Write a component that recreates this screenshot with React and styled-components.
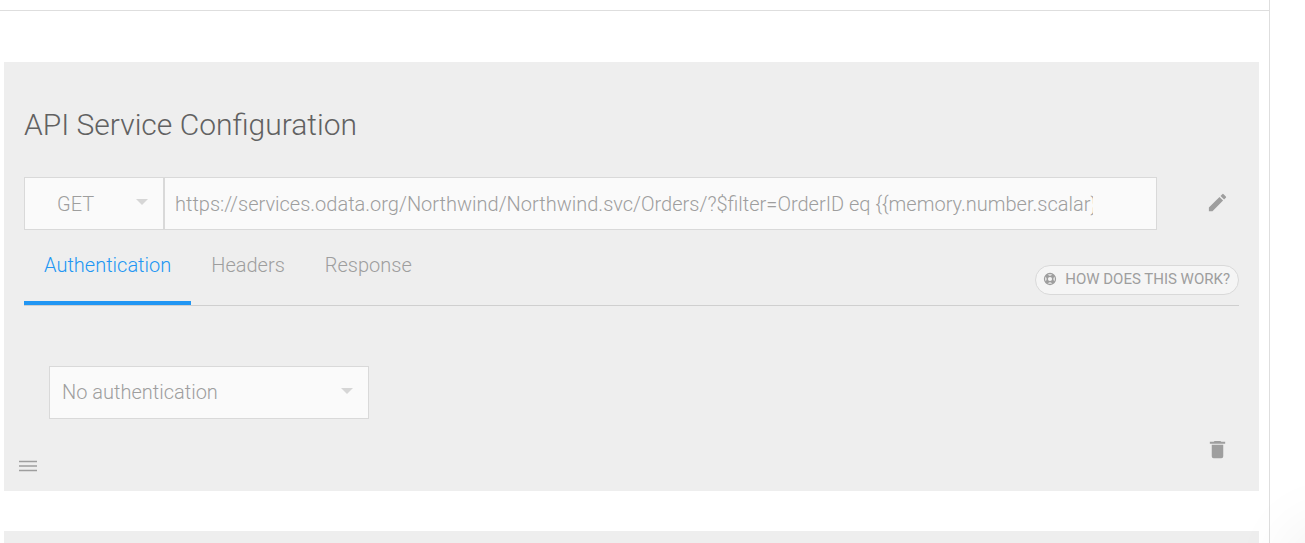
import { useState } from "react";
import styled, { createGlobalStyle } from "styled-components";

const tabs = ["Authentication", "Headers", "Response"];

function App() {
  const [method, setMethod] = useState("GET");
  const [url, setUrl] = useState(
    "https://services.odata.org/Northwind/Northwind.svc/Orders/?$filter=OrderID eq {{memory.number.scalar}}"
  );
  const [activeTab, setActiveTab] = useState("Authentication");
  const [auth, setAuth] = useState("none");

  return (
    <>
      <GlobalStyle />
      <Page>
        <Main>
          <TopBar />
          <CardList>
            <Card>
              <Title>API Service Configuration</Title>
              <RequestRow>
                <MethodBox>
                  <MethodSelect
                    aria-label="Method"
                    value={method}
                    onChange={(e) => setMethod(e.target.value)}
                  >
                    <option>GET</option>
                    <option>POST</option>
                    <option>PUT</option>
                    <option>DELETE</option>
                  </MethodSelect>
                  <Arrow viewBox="0 0 12 6">
                    <path d="M0 0h12L6 6z" />
                  </Arrow>
                </MethodBox>
                <UrlInput
                  aria-label="URL"
                  type="text"
                  value={url}
                  onChange={(e) => setUrl(e.target.value)}
                />
                <IconButton aria-label="Edit">
                  <Icon viewBox="0 0 24 24">
                    <path d="M3 17.25V21h3.75L17.81 9.94l-3.75-3.75L3 17.25zM20.71 7.04a1 1 0 0 0 0-1.41l-2.34-2.34a1 1 0 0 0-1.41 0l-1.83 1.83 3.75 3.75 1.83-1.83z" />
                  </Icon>
                </IconButton>
              </RequestRow>
              <TabBar>
                <TabList role="tablist">
                  {tabs.map((tab) => (
                    <Tab
                      key={tab}
                      role="tab"
                      aria-selected={tab === activeTab}
                      $active={tab === activeTab}
                      onClick={() => setActiveTab(tab)}
                    >
                      {tab}
                    </Tab>
                  ))}
                </TabList>
                <HelpButton>
                  <HelpIcon viewBox="0 0 14 14">
                    <circle cx="7" cy="7" r="5.5" strokeWidth="1.3" />
                    <circle cx="7" cy="7" r="2.8" strokeWidth="1.5" />
                    <path
                      d="M3.2 3.2l1.8 1.8M10.8 3.2L9 5M3.2 10.8L5 9M10.8 10.8L9 9"
                      strokeWidth="3.2"
                    />
                  </HelpIcon>
                  HOW DOES THIS WORK?
                </HelpButton>
              </TabBar>
              <TabPanel role="tabpanel">
                <AuthBox>
                  <AuthSelect
                    aria-label="Authentication type"
                    value={auth}
                    onChange={(e) => setAuth(e.target.value)}
                  >
                    <option value="none">No authentication</option>
                    <option value="basic">Basic authentication</option>
                  </AuthSelect>
                  <Arrow viewBox="0 0 12 6">
                    <path d="M0 0h12L6 6z" />
                  </Arrow>
                </AuthBox>
              </TabPanel>
              <CardFooter>
                <DragButton aria-label="Move">
                  <DragIcon viewBox="0 0 18 12">
                    <path d="M0 1.5h18M0 6h18M0 10.5h18" />
                  </DragIcon>
                </DragButton>
                <IconButton aria-label="Delete">
                  <Icon viewBox="0 0 24 24">
                    <path d="M6 19a2 2 0 0 0 2 2h8a2 2 0 0 0 2-2V7H6v12zM20 4h-4l-1-1H9L8 4H4v2h16V4z" />
                  </Icon>
                </IconButton>
              </CardFooter>
            </Card>
            <Card />
          </CardList>
        </Main>
        <Side />
      </Page>
      <CornerShadow />
    </>
  );
}

const GlobalStyle = createGlobalStyle`
  * {
    box-sizing: border-box;
  }

  body {
    margin: 0;
    overflow: hidden;
    background-color: #fff;
    color: #9e9e9e;
    font-family: Roboto, sans-serif;
    font-weight: 300;
  }

  button, input, select {
    margin: 0;
    font: inherit;
    color: inherit;
  }
`;

const Page = styled.div`
  display: flex;
  height: 100vh;
`;

const Main = styled.main`
  flex: 1;
  min-width: 0;
  overflow: hidden;
  border-right: 1px solid #dedede;
`;

const Side = styled.aside`
  width: 35px;
`;

const TopBar = styled.div`
  height: 11px;
  border-bottom: 1px solid #dedede;
`;

const CardList = styled.div`
  display: flex;
  flex-direction: column;
  gap: 40px;
  padding: 51px 10px 0 4px;
`;

const Card = styled.section`
  padding: 41px 20px 19px;
  background-color: #eee;
`;

const Title = styled.h2`
  margin: 0 0 30px;
  font-size: 30px;
  font-weight: 300;
  line-height: 44px;
  color: #616161;
`;

const RequestRow = styled.div`
  display: flex;
  align-items: center;
`;

const SelectBox = styled.div`
  display: flex;
  position: relative;
`;

const MethodBox = styled(SelectBox)`
  width: 140px;
`;

const AuthBox = styled(SelectBox)`
  width: 320px;
`;

const Select = styled.select`
  appearance: none;
  width: 100%;
  height: 53px;
  border: 1px solid #d9d9d9;
  border-radius: 0;
  background-color: #fafafa;
  font-size: 20px;
`;

const MethodSelect = styled(Select)`
  padding: 0 32px;
`;

const AuthSelect = styled(Select)`
  padding: 0 12px 2px;
`;

const Arrow = styled.svg`
  position: absolute;
  top: 22px;
  right: 16px;
  width: 12px;
  height: 6px;
  fill: #d6d6d6;
  pointer-events: none;
`;

const UrlInput = styled.input`
  flex: 1;
  min-width: 0;
  height: 53px;
  margin-right: 39px;
  padding: 0 63px 0 10px;
  border: 1px solid #d9d9d9;
  border-radius: 0;
  background-color: #fafafa;
  font-size: 20px;
`;

const IconButton = styled.button`
  display: flex;
  align-items: center;
  justify-content: center;
  width: 43px;
  height: 44px;
  padding: 0 0 2px;
  border: none;
  background: none;
`;

const Icon = styled.svg`
  width: 23px;
  height: 23px;
  fill: #9e9e9e;
`;

const TabBar = styled.div`
  display: flex;
  align-items: center;
  justify-content: space-between;
  height: 76px;
  border-bottom: 1px solid #cfcfcf;
`;

const TabList = styled.div`
  display: flex;
  height: 100%;
`;

const Tab = styled.button`
  padding: 0 20px 2px;
  border: none;
  border-bottom: 4px solid ${(props) => (props.$active ? "#2196f3" : "transparent")};
  background: none;
  font-size: 20px;
  color: ${(props) => (props.$active ? "#2196f3" : "#9e9e9e")};
`;

const HelpButton = styled.button`
  display: flex;
  align-items: center;
  gap: 8px;
  height: 30px;
  margin-top: 24px;
  padding: 0 8px 2px 7px;
  border: 1px solid #d9d9d9;
  border-radius: 15px;
  background-color: #f5f5f5;
  font-size: 15px;
  font-weight: 400;
`;

const HelpIcon = styled.svg`
  width: 14px;
  height: 14px;
  fill: none;
  stroke: #9e9e9e;
`;

const TabPanel = styled.div`
  padding: 60px 25px 9px;
`;

const CardFooter = styled.div`
  display: flex;
  align-items: flex-end;
  justify-content: space-between;
  margin-left: -5px;
`;

const DragButton = styled.button`
  display: flex;
  padding: 0;
  border: none;
  background: none;
`;

const DragIcon = styled.svg`
  width: 18px;
  height: 12px;
  fill: none;
  stroke: #9e9e9e;
  stroke-width: 1.4;
`;

const CornerShadow = styled.div`
  position: fixed;
  right: -60px;
  bottom: -60px;
  width: 50px;
  height: 50px;
  border-radius: 50%;
  box-shadow: 0 0 80px 10px rgba(0, 0, 0, 0.16);
  pointer-events: none;
`;

export default App;
